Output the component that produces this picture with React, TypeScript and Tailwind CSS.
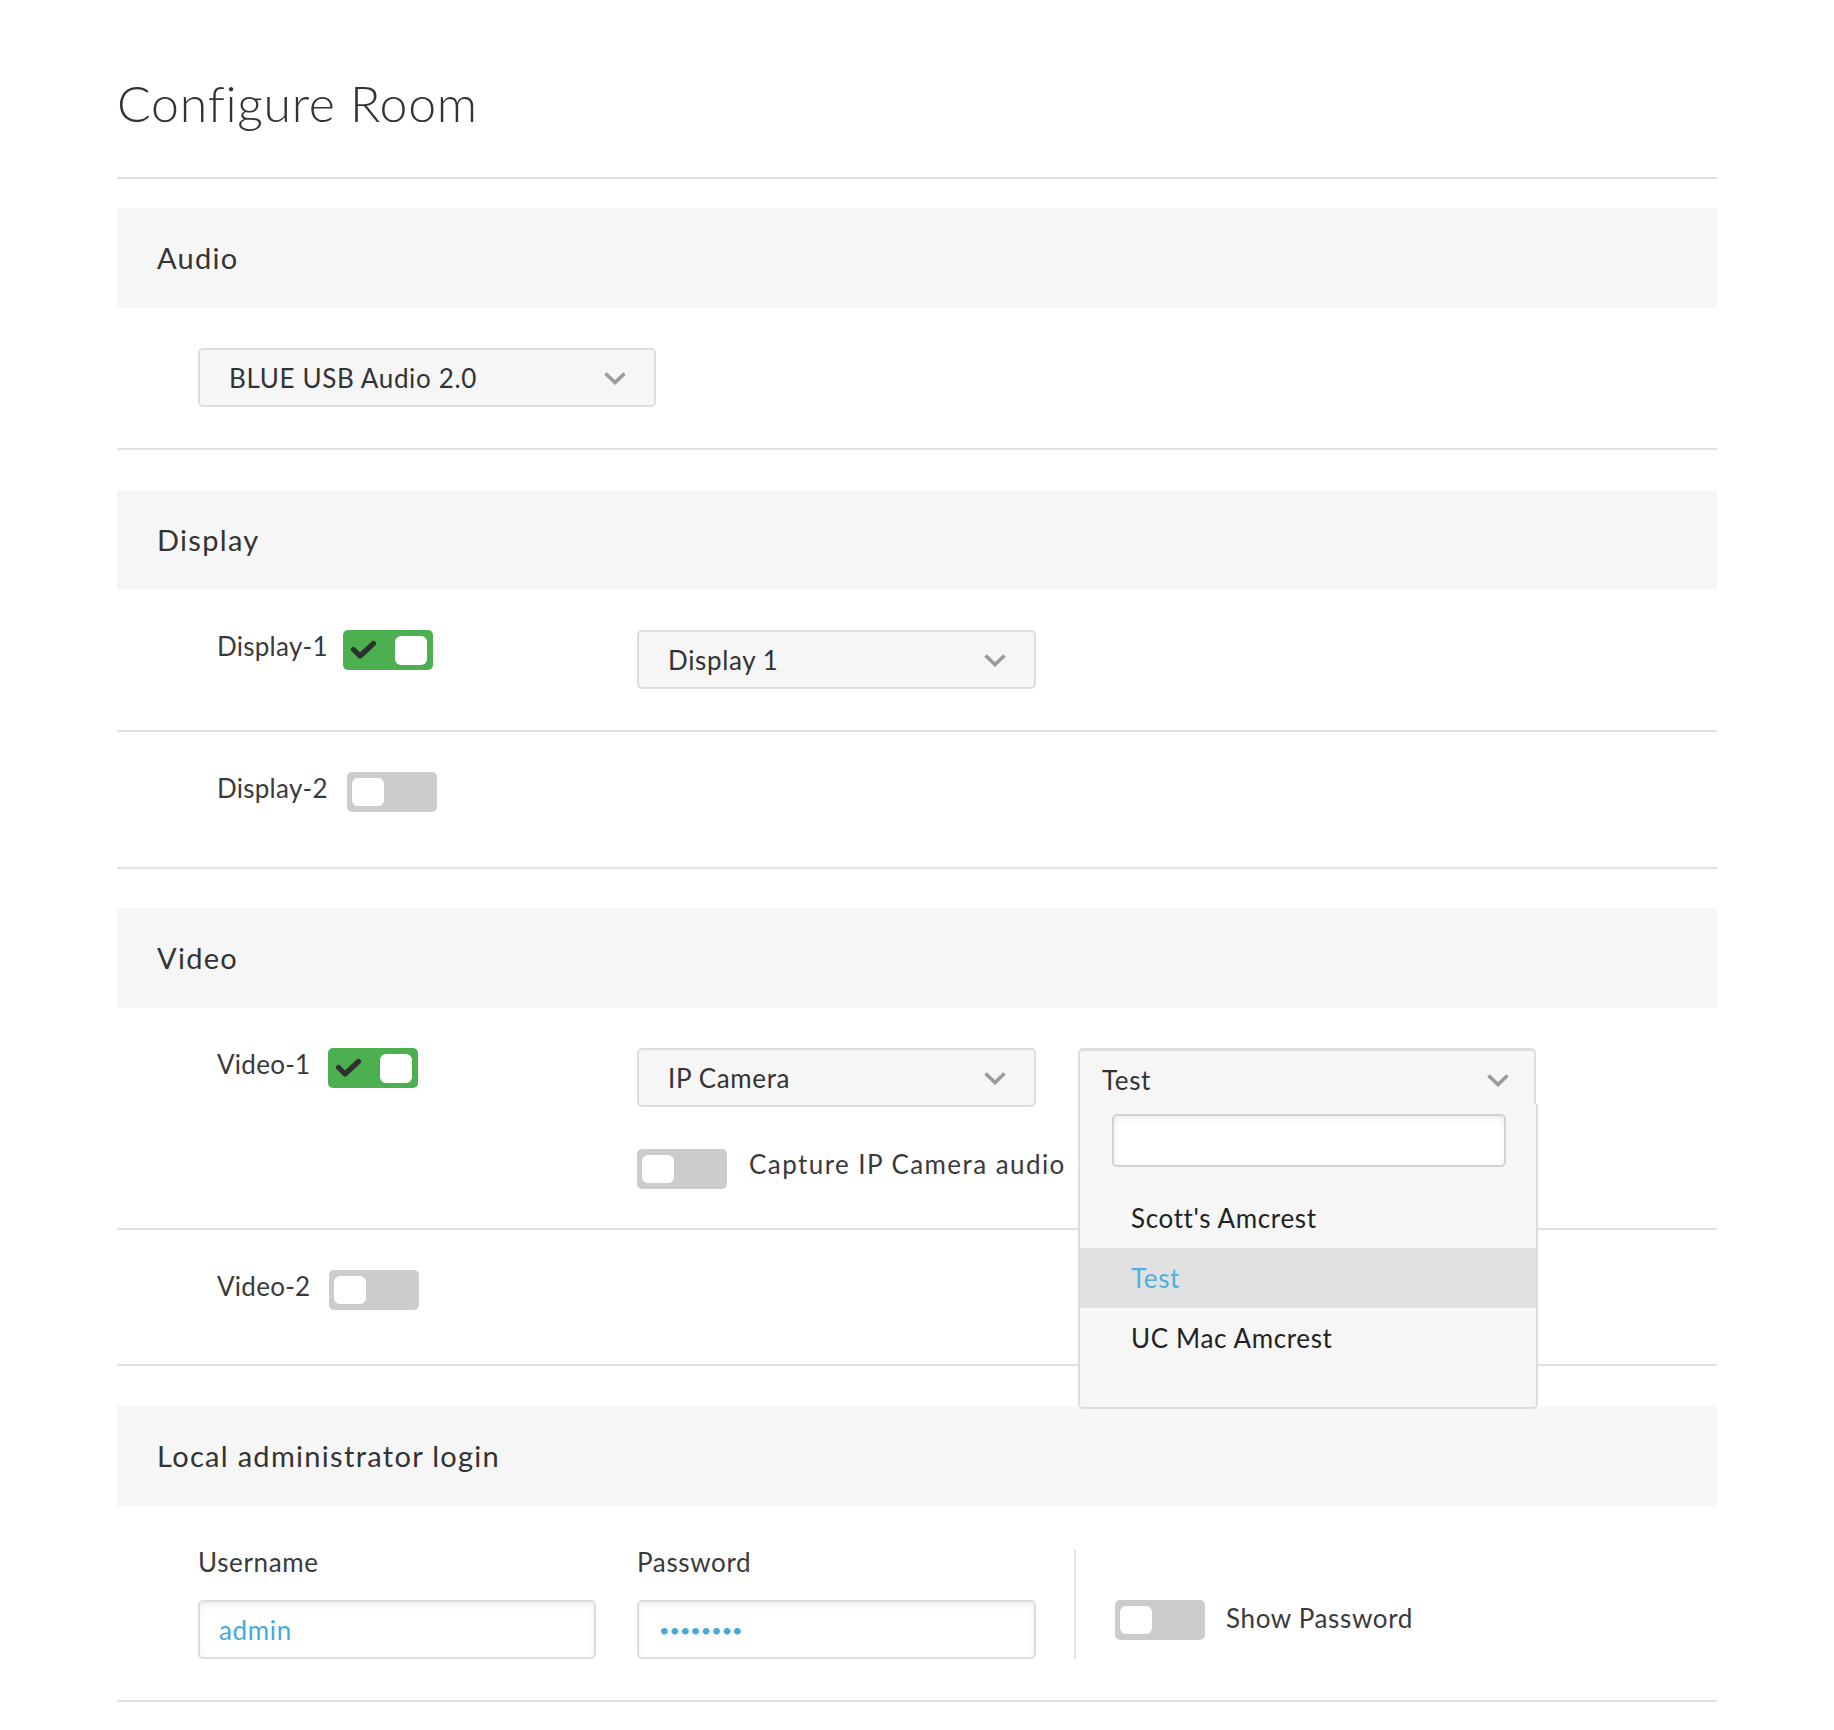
import React from "react";

function Chevron() {
  return (
    <svg width="24" height="14" viewBox="0 0 24 14" className="shrink-0">
      <polyline points="2.5,2.5 12,11.5 21.5,2.5" fill="none" stroke="#9b9b9b" strokeWidth="3.6" strokeLinejoin="miter" />
    </svg>
  );
}

function Check() {
  return (
    <svg width="27" height="20" viewBox="0 0 27 20" className="shrink-0">
      <polyline points="3.5,9.5 10,16 23.5,3.5" fill="none" stroke="#2f2f2f" strokeWidth="5.2" strokeLinecap="round" strokeLinejoin="round" />
    </svg>
  );
}

function Toggle({ on }: { on: boolean }) {
  if (on) {
    return (
      <div className="w-[90px] h-[40px] rounded-[5px] bg-[#4caf50] flex items-center justify-between pl-[7px] pr-[6px] shrink-0">
        <Check />
        <div className="w-[32px] h-[29px] rounded-[6px] bg-white" />
      </div>
    );
  }
  return (
    <div className="w-[90px] h-[40px] rounded-[5px] bg-[#cccccc] flex items-center pl-[5px] shrink-0">
      <div className="w-[32px] h-[28px] rounded-[6px] bg-white" />
    </div>
  );
}

function Select({ value, width }: { value: string; width: string }) {
  return (
    <div className={`${width} h-[59px] border-2 border-[#dddddd] rounded-[5px] bg-[#f6f6f6] flex items-center justify-between pl-[29px] pr-[27px] text-[26px] leading-[32px] text-[#333333]`}>
      <span>{value}</span>
      <Chevron />
    </div>
  );
}

function SectionHeader({ children }: { children: React.ReactNode }) {
  return (
    <div className="h-[100px] bg-[#f6f6f6] flex items-center pl-[40px] text-[29px] leading-[36px] tracking-[0.045em] text-[#333333]">
      {children}
    </div>
  );
}

function RowLabel({ children }: { children: React.ReactNode }) {
  return <span className="text-[26px] leading-[32px] tracking-[0.01em] text-[#3a3a3a] whitespace-nowrap">{children}</span>;
}

export default function App() {
  return (
    <div className="min-h-[1730px] bg-white font-['Lato','Liberation_Sans',sans-serif] tracking-[0.04em]">
      <div className="w-[1600px] mx-auto">
        <div className="h-[179px] pt-[73px] border-b-2 border-[#e2e2e2]">
          <h1 className="text-[50px] leading-[60px] font-light tracking-[0.015em] text-[#333333]">Configure Room</h1>
        </div>

        {/* Audio */}
        <div className="mt-[29px]">
          <SectionHeader>Audio</SectionHeader>
          <div className="h-[142px] border-b-2 border-[#e2e2e2] pt-[40px] pl-[81px]">
            <Select value="BLUE USB Audio 2.0" width="w-[458px]" />
          </div>
        </div>

        {/* Display */}
        <div className="mt-[40px]">
          <SectionHeader>Display</SectionHeader>
          <div className="h-[142px] border-b-2 border-[#e2e2e2] pt-[40px] flex items-start">
            <div className="w-[520px] shrink-0 pl-[100px] flex items-start gap-[15px]">
              <RowLabel>Display-1</RowLabel>
              <Toggle on />
            </div>
            <Select value="Display 1" width="w-[399px]" />
          </div>
          <div className="h-[137px] border-b-2 border-[#e2e2e2] pt-[40px] flex items-start">
            <div className="w-[520px] shrink-0 pl-[100px] flex items-start gap-[19px]">
              <RowLabel>Display-2</RowLabel>
              <Toggle on={false} />
            </div>
          </div>
        </div>

        {/* Video */}
        <div className="mt-[39px]">
          <SectionHeader>Video</SectionHeader>
          <div className="h-[222px] border-b-2 border-[#e2e2e2] pt-[40px] flex items-start">
            <div className="w-[520px] shrink-0 pl-[100px] flex items-start gap-[18px]">
              <RowLabel>Video-1</RowLabel>
              <Toggle on />
            </div>
            <div className="w-[399px] shrink-0 flex flex-col">
              <Select value="IP Camera" width="w-[399px]" />
              <div className="mt-[41px] flex items-center gap-[22px]">
                <Toggle on={false} />
                <span className="mb-[9px] text-[26px] leading-[32px] tracking-[0.055em] text-[#3a3a3a] whitespace-nowrap">Capture IP Camera audio</span>
              </div>
            </div>
            <div className="ml-[42px] relative w-[458px] h-[59px] shrink-0">
              <div className="absolute left-0 top-0 z-10 w-[460px]">
                <div className="w-[458px] h-[56px] bg-[#f6f6f6] border-2 border-t-[3px] border-b-0 border-[#dedede] rounded-t-[5px] flex items-center justify-between pl-[22px] pr-[24px] pt-[4px] text-[26px] leading-[32px] text-[#333333]">
                  <span>Test</span>
                  <Chevron />
                </div>
                <div className="bg-[#f6f6f6] border-2 border-t-0 border-[#dedede] rounded-b-[5px] pt-[10px]">
                  <div className="ml-[32px] w-[394px] h-[53px] bg-white border-2 border-[#d2d2d2] rounded-[5px] shadow-[inset_0_3px_6px_rgba(0,0,0,0.07)]" />
                  <div className="mt-[21px] pb-[39px] text-[26px] leading-[32px]">
                    <div className="h-[60px] flex items-center pl-[51px] text-[#222222]">Scott's Amcrest</div>
                    <div className="h-[60px] flex items-center pl-[51px] bg-[#e1e1e1] text-[#4fb0e0]">Test</div>
                    <div className="h-[60px] flex items-center pl-[51px] text-[#222222]">UC Mac Amcrest</div>
                  </div>
                </div>
              </div>
            </div>
          </div>
          <div className="h-[136px] border-b-2 border-[#e2e2e2] pt-[40px] flex items-start">
            <div className="w-[520px] shrink-0 pl-[100px] flex items-start gap-[19px]">
              <RowLabel>Video-2</RowLabel>
              <Toggle on={false} />
            </div>
          </div>
        </div>

        {/* Local administrator login */}
        <div className="mt-[40px]">
          <SectionHeader>Local administrator login</SectionHeader>
          <div className="h-[196px] border-b-2 border-[#e2e2e2] pt-[40px] pl-[81px] flex items-start">
            <div className="w-[398px] shrink-0 flex flex-col">
              <span className="text-[26px] leading-[32px] text-[#3a3a3a]">Username</span>
              <div className="mt-[22px] h-[59px] bg-white border-2 border-[#dddddd] rounded-[5px] shadow-[inset_0_3px_6px_rgba(0,0,0,0.07)] flex items-center pl-[19px] text-[26px] leading-[32px] text-[#45a9dc]">
                admin
              </div>
            </div>
            <div className="ml-[41px] w-[399px] shrink-0 flex flex-col">
              <span className="text-[26px] leading-[32px] text-[#3a3a3a]">Password</span>
              <div className="mt-[22px] h-[59px] bg-white border-2 border-[#dddddd] rounded-[5px] shadow-[inset_0_3px_6px_rgba(0,0,0,0.07)] flex items-center pl-[20px] text-[18px] leading-[32px] tracking-normal text-[#45a9dc]">
                ••••••••
              </div>
            </div>
            <div className="ml-[38px] mt-[4px] w-[2px] h-[109px] bg-[#e2e2e2]" />
            <div className="ml-[39px] mt-[54px] flex items-center gap-[21px]">
              <Toggle on={false} />
              <span className="mb-[5px] text-[26px] leading-[32px] text-[#3a3a3a]">Show Password</span>
            </div>
          </div>
        </div>
      </div>
    </div>
  );
}
